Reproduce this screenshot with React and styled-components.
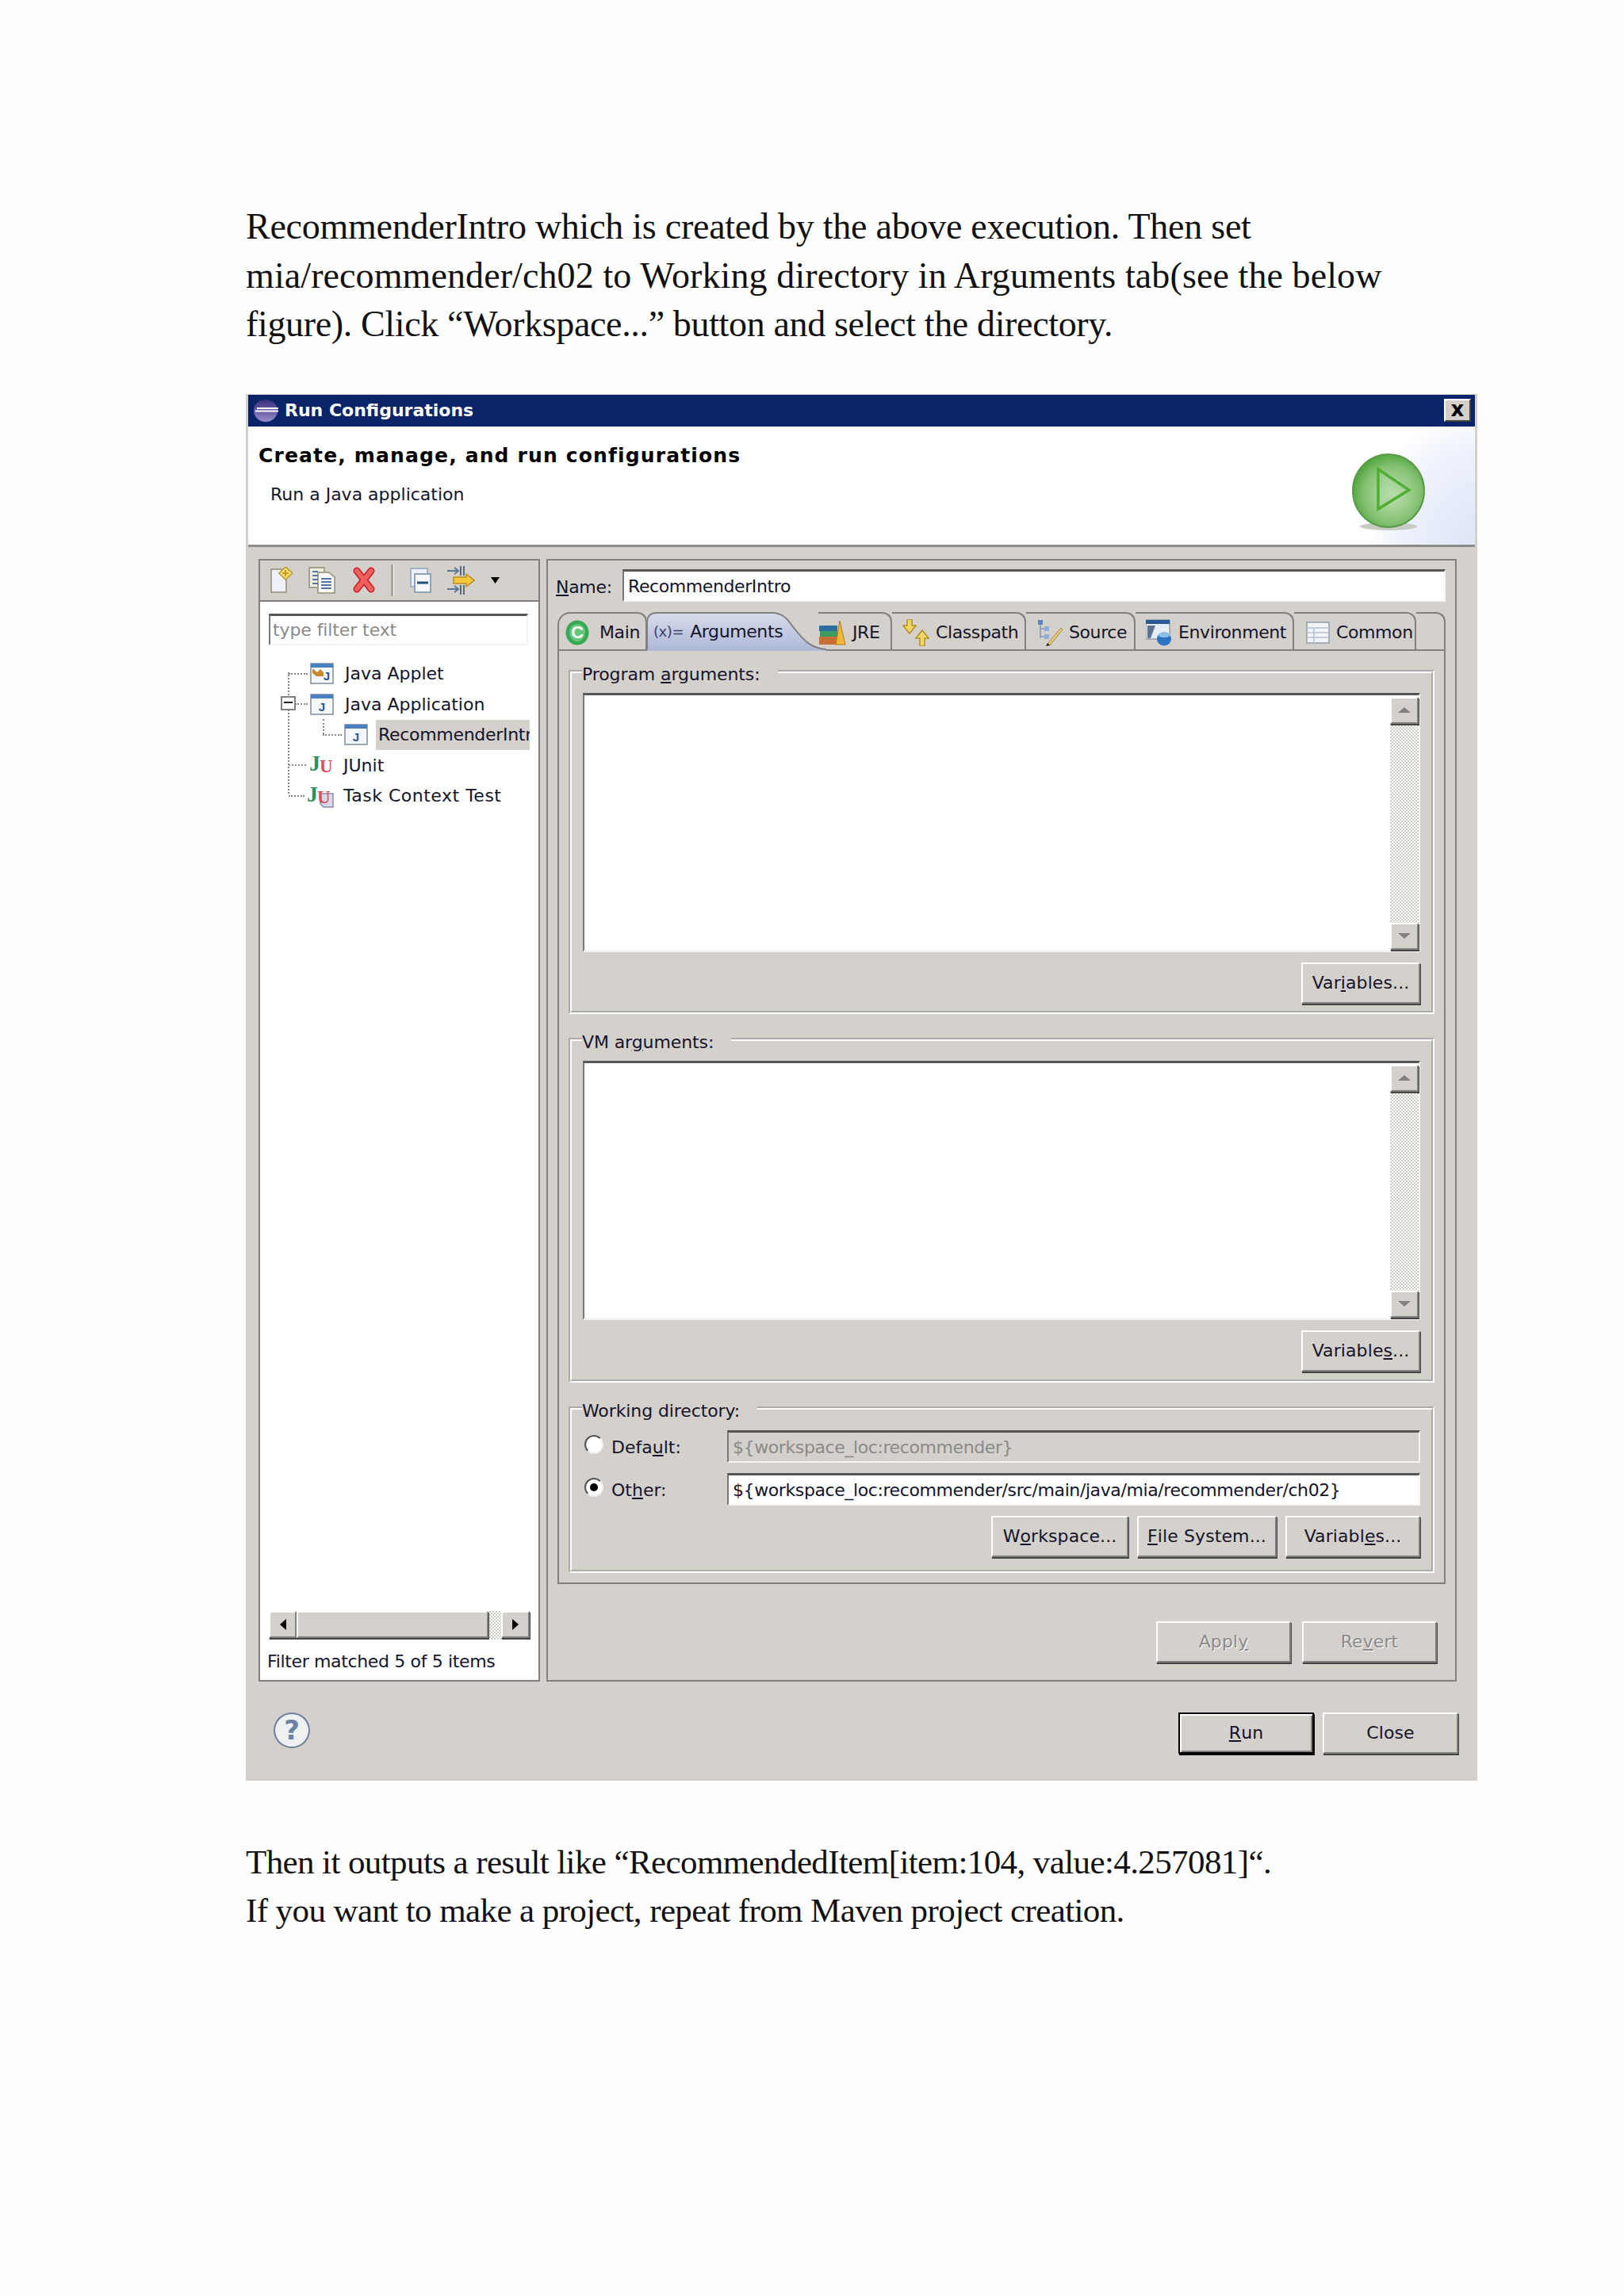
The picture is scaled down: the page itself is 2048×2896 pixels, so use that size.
import React from "react";
import styled, { createGlobalStyle } from "styled-components";

const GlobalStyle = createGlobalStyle`
  html, body {
    margin: 0;
    padding: 0;
    background: #fefefe;
  }
`;

const UI_FONT = `"DejaVu Sans", "Liberation Sans", sans-serif`;

const Page = styled.div`
  width: 2048px;
  height: 2896px;
  box-sizing: border-box;
  padding: 255px 0 0 310px;
  overflow: hidden;
`;

const Paragraph = styled.div`
  font-family: "Liberation Serif", serif;
  font-size: ${({ $size }) => $size || 46}px;
  line-height: 61.5px;
  color: #111;
  white-space: nowrap;
  font-variant-numeric: oldstyle-nums;
`;

const Line = styled.div`
  letter-spacing: ${({ $ls }) => $ls || 0}px;
`;

const Window = styled.div`
  width: 1553px;
  height: 1749px;
  box-sizing: border-box;
  margin: 57px 0 72px;
  padding: 1px 3px 0;
  background: #d4d0cb;
  display: flex;
  flex-direction: column;
  font-family: ${UI_FONT};
  font-size: 22px;
  color: #14142a;
`;

const TitleBar = styled.div`
  height: 40px;
  flex: none;
  background: #0a246a;
  display: flex;
  align-items: center;
  padding: 0 5px 0 7px;
  gap: 8px;
`;

const TitleText = styled.span`
  flex: 1;
  color: #fff;
  font-size: 22px;
  font-weight: 700;
`;

const CloseBox = styled.div`
  width: 34px;
  height: 29px;
  box-sizing: border-box;
  background: #d4d0c8;
  border: 2px solid;
  border-color: #fff #404040 #404040 #fff;
  color: #000;
  font-size: 26px;
  font-weight: 700;
  line-height: 22px;
  text-align: center;
`;

const Banner = styled.div`
  height: 152px;
  flex: none;
  box-sizing: border-box;
  background:
    radial-gradient(ellipse 135px 170px at 100% 100%, #dde5f8 0%, #eef2fc 70%, #fff 100%);
  border-bottom: 3px solid #8c8c88;
  padding: 0 63px 0 13px;
  display: flex;
  justify-content: space-between;
`;

const BannerText = styled.div`
  padding-top: 21px;
  color: #000;
`;

const Heading = styled.div`
  font-size: 25px;
  font-weight: 700;
  line-height: 32px;
  letter-spacing: 1.15px;
`;

const Subheading = styled.div`
  margin: 19px 0 0 15px;
  line-height: 28px;
  color: #14142a;
`;

const PlayWrap = styled.div`
  align-self: flex-end;
  margin-bottom: 12px;
`;

const Panels = styled.div`
  flex: none;
  display: flex;
  gap: 8px;
  padding: 15px 23px 0 13px;
`;

const LeftPanel = styled.div`
  width: 355px;
  height: 1416px;
  box-sizing: border-box;
  border: 2px solid #808080;
  background: #fff;
  display: flex;
  flex-direction: column;
`;

const Toolbar = styled.div`
  height: 52px;
  flex: none;
  box-sizing: border-box;
  background: #d4d0cb;
  border-bottom: 2px solid #808080;
  display: flex;
  align-items: center;
  gap: 20px;
  padding-left: 13px;
`;

const ToolSep = styled.div`
  width: 3px;
  height: 40px;
  background: #a8a59e;
  border-right: 1px solid #fff;
`;

const sunken = `
  box-sizing: border-box;
  border: 2px solid;
  border-top: 3px solid #555;
  border-left-color: #777;
  border-right-color: #f4f4f2;
  border-bottom-color: #f4f4f2;
`;

const FilterInput = styled.div`
  ${sunken}
  height: 40px;
  margin: 15px 13px 0 11px;
  padding-left: 3px;
  line-height: 36px;
  letter-spacing: -0.1px;
  color: #8a8a8a;
  background: #fff;
`;

const Tree = styled.div`
  position: relative;
  flex: 1;
  padding-top: 17px;

  &::before {
    content: "";
    position: absolute;
    left: 35px;
    top: 34px;
    height: 153px;
    border-left: 2px dotted #8a8a8a;
  }
`;

const TreeRow = styled.div`
  position: relative;
  height: 38.5px;
  display: flex;
  align-items: center;
  gap: ${({ $gap }) => $gap || 14}px;
  padding-left: ${({ $left }) => $left}px;

  &::before {
    content: "";
    position: absolute;
    left: ${({ $line }) => $line}px;
    width: ${({ $lineW }) => $lineW}px;
    top: 18px;
    border-top: 2px dotted #8a8a8a;
  }
`;

const ChildLine = styled.span`
  position: absolute;
  left: 79px;
  top: -1px;
  height: 19px;
  border-left: 2px dotted #8a8a8a;
`;

const Expander = styled.span`
  position: absolute;
  left: 26px;
  top: 9px;
  width: 19px;
  height: 18px;
  box-sizing: border-box;
  border: 2px solid #808080;
  background: #fff;
  z-index: 1;

  &::after {
    content: "";
    position: absolute;
    left: 2px;
    right: 2px;
    top: 5px;
    border-top: 2px solid #222;
  }
`;

const TreeLabel = styled.span`
  white-space: nowrap;
  letter-spacing: ${({ $ls }) => $ls || 0}px;
`;

const SelectedLabel = styled.span`
  width: 194px;
  height: 38px;
  margin-left: -4px;
  padding-left: 3px;
  box-sizing: border-box;
  background: #d4d0cb;
  overflow: hidden;
  white-space: nowrap;
  line-height: 38px;
  letter-spacing: -0.3px;
`;

const raised = `
  box-sizing: border-box;
  background: #d4d0cb;
  border: 2px solid;
  border-color: #fff #808080 #808080 #fff;
  box-shadow: 1px 2px 0 #444;
`;

const HScroll = styled.div`
  flex: none;
  height: 36px;
  margin: 0 11px;
  display: flex;
  background: repeating-conic-gradient(#cfccc6 0 25%, #fff 0 50%) 0 0 / 4px 4px;
`;

const ScrollButton = styled.div`
  ${raised}
  flex: none;
  width: ${({ $w }) => $w || 36}px;
  height: ${({ $h }) => $h || 34}px;
  display: flex;
  align-items: center;
  justify-content: center;
`;

const Thumb = styled.div`
  ${raised}
  width: 242px;
  height: 34px;
  flex: none;
  margin-right: 16px;
`;

const Arrow = styled.span`
  width: 0;
  height: 0;
  border-style: solid;
  border-color: transparent;
  ${({ $dir, $color }) =>
    $dir === "left"
      ? `border-width: 7px 8px 7px 0; border-right-color: ${$color};`
      : $dir === "right"
      ? `border-width: 7px 0 7px 8px; border-left-color: ${$color};`
      : $dir === "up"
      ? `border-width: 0 8px 7px 8px; border-bottom-color: ${$color};`
      : `border-width: 7px 8px 0 8px; border-top-color: ${$color};`}
`;

const Status = styled.div`
  flex: none;
  height: 26px;
  margin: 15px 0 10px 9px;
  line-height: 26px;
  letter-spacing: -0.35px;
  white-space: nowrap;
`;

const RightPanel = styled.div`
  width: 1148px;
  height: 1416px;
  box-sizing: border-box;
  border: 2px solid #808080;
  padding: 11px 12px 0;
  display: flex;
  flex-direction: column;
`;

const NameRow = styled.div`
  display: flex;
  align-items: center;
  height: 41px;
  margin-left: -2px;
`;

const NameLabel = styled.span`
  width: 84px;
  flex: none;
  line-height: 28px;
  padding-top: 5px;
  letter-spacing: -0.3px;
`;

const TextField = styled.div`
  ${sunken}
  flex: 1;
  height: 41px;
  background: ${({ $disabled }) => ($disabled ? "#d4d0cb" : "#fff")};
  color: ${({ $disabled }) => ($disabled ? "#8a8a8a" : "#14142a")};
  padding-left: 5px;
  line-height: 38px;
  letter-spacing: -0.4px;
  white-space: nowrap;
`;

const Tabs = styled.div`
  display: flex;
  height: 47px;
  margin-top: 13px;
  flex: none;
  letter-spacing: -0.4px;
`;

const Tab = styled.div`
  position: relative;
  box-sizing: border-box;
  width: ${({ $w }) => $w}px;
  margin-left: ${({ $over }) => ($over ? -10 : 0)}px;
  padding: 3px 0 0 ${({ $pad }) => $pad}px;
  display: flex;
  align-items: center;
  gap: ${({ $gap }) => $gap || 8}px;
  border-right: ${({ $active }) => ($active ? 0 : "2px solid #808080")};
  border-top: ${({ $active }) => ($active ? 0 : "2px solid #808080")};
  border-left: ${({ $first }) => ($first ? "2px solid #808080" : 0)};
  border-top-left-radius: ${({ $first }) => ($first ? 16 : 0)}px;
  border-top-right-radius: ${({ $active }) => ($active ? 0 : 12)}px;
  white-space: nowrap;
  z-index: ${({ $active }) => ($active ? 1 : 0)};
`;

const TabShape = styled.svg`
  position: absolute;
  left: 0;
  top: 0;
  z-index: -1;
`;

const ArgsGlyph = styled.span`
  font-size: 18px;
  color: #33436b;
`;

const Folder = styled.div`
  width: 1120px;
  height: 1179px;
  box-sizing: border-box;
  border: 2px solid #808080;
  padding: 10px 12px 0;
  display: flex;
  flex-direction: column;
  gap: 16px;
  flex: none;
`;

const Group = styled.fieldset`
  margin: 0;
  min-width: 0;
  height: ${({ $h }) => $h}px;
  box-sizing: border-box;
  border: 4px groove #fff;
  padding: ${({ $top }) => $top || 11}px 14px 0;
  display: flex;
  flex-direction: column;
  flex: none;
`;

const GroupLabel = styled.legend`
  margin-left: -1px;
  padding: 8px 22px 0 0;
  line-height: 24px;
  letter-spacing: -0.1px;
  white-space: nowrap;
`;

const TextBox = styled.div`
  ${sunken}
  height: 327px;
  flex: none;
  background: #fff;
  display: flex;
  justify-content: flex-end;
  padding-top: 2px;
  border-bottom-width: 3px;
  border-right-width: 2px;
`;

const VScroll = styled.div`
  width: 36px;
  display: flex;
  flex-direction: column;
  background: repeating-conic-gradient(#cfccc6 0 25%, #fff 0 50%) 0 0 / 4px 4px;
`;

const VTrack = styled.div`
  flex: 1;
`;

const PushButton = styled.div`
  box-sizing: border-box;
  width: ${({ $w }) => $w}px;
  height: 52px;
  flex: none;
  background: #d4d0cb;
  border: 2px solid;
  border-color: ${({ $default }) => ($default ? "#000" : "#fff #808080 #808080 #fff")};
  box-shadow: ${({ $default }) =>
    $default ? "inset 2px 2px 0 #fff, inset -2px -2px 0 #808080, 1px 2px 0 #000" : "1px 2px 0 #444"};
  display: flex;
  align-items: center;
  justify-content: center;
  white-space: nowrap;
  letter-spacing: 0.1px;
  color: ${({ $disabled }) => ($disabled ? "#8a8a8a" : "inherit")};
  text-shadow: ${({ $disabled }) => ($disabled ? "1px 1px 0 #fff" : "none")};
`;

const ButtonRow = styled.div`
  display: flex;
  justify-content: flex-end;
  gap: ${({ $gap }) => $gap || 11}px;
  margin-top: ${({ $top }) => $top || 0}px;
  padding-right: ${({ $right }) => $right || 0}px;
`;

const FieldRow = styled.div`
  display: flex;
  align-items: center;
  height: 41px;
  margin-bottom: 13px;
`;

const Radio = styled.span`
  position: relative;
  flex: none;
  width: 24px;
  height: 24px;
  margin: 0 0 4px 2px;
  box-sizing: border-box;
  border-radius: 50%;
  border: 2px solid;
  border-color: #555 #f0f0f0 #f0f0f0 #555;
  background: #fff;

  &::after {
    content: "";
    display: ${({ $on }) => ($on ? "block" : "none")};
    position: absolute;
    inset: 5px;
    border-radius: 50%;
    background: #000;
  }
`;

const FieldLabel = styled.span`
  width: 146px;
  flex: none;
  margin-left: 10px;
  padding-top: 2px;
`;

const Footer = styled.div`
  flex: 1;
  display: flex;
  justify-content: space-between;
  align-items: flex-start;
  padding: 39px 21px 0 32px;
`;

const HelpIcon = styled.div`
  width: 46px;
  height: 45px;
  box-sizing: border-box;
  border-radius: 50%;
  border: 2px solid #6d7f9a;
  background: #eef0f2;
  color: #6a84a6;
  font-size: 34px;
  font-weight: 700;
  line-height: 40px;
  text-align: center;
`;

const EclipseIcon = () => (
  <svg width="31" height="28" viewBox="0 0 31 28">
    <defs>
      <linearGradient id="ecl" x1="0" y1="0" x2="0" y2="1">
        <stop offset="0" stopColor="#37307f" />
        <stop offset="1" stopColor="#9a8ccb" />
      </linearGradient>
    </defs>
    <ellipse cx="15" cy="14" rx="15" ry="14" fill="url(#ecl)" />
    <path d="M4 11h27M2 14.5h29" stroke="#fff" strokeWidth="2" />
  </svg>
);

const PlayIcon = () => (
  <svg width="92" height="98" viewBox="0 0 92 98">
    <defs>
      <radialGradient id="playFill" cx="0.55" cy="0.55" r="0.6">
        <stop offset="0" stopColor="#c4e2b8" />
        <stop offset="0.65" stopColor="#84c172" />
        <stop offset="1" stopColor="#47a032" />
      </radialGradient>
    </defs>
    <ellipse cx="46" cy="92" rx="36" ry="5" fill="#c9ccc4" />
    <ellipse cx="46" cy="47" rx="45" ry="46" fill="url(#playFill)" stroke="#5b9a48" strokeWidth="2" />
    <path d="M33 20L72 46L33 70Z" fill="#a8d49c" fillOpacity="0.5" stroke="#4fae33" strokeWidth="3.5" />
  </svg>
);

const NewIcon = () => (
  <svg width="28" height="34" viewBox="0 0 28 34">
    <path d="M1 3H14L20 9V32H1Z" fill="#eef1fa" stroke="#a5a18c" strokeWidth="2" />
    <path d="M19 0L28 8L19 16L11 8Z" fill="#f6df6e" stroke="#b8962a" strokeWidth="1.5" />
    <path d="M19 4V12M15 8H23" stroke="#c89a1e" strokeWidth="2" />
  </svg>
);

const DuplicateIcon = () => (
  <svg width="36" height="34" viewBox="0 0 36 34">
    <path d="M1 1H20V26H1Z" fill="#f1efe4" stroke="#a5a18c" strokeWidth="2" />
    <path d="M12 7H26L33 13V33H12Z" fill="#fafafa" stroke="#a5a18c" strokeWidth="2" />
    <path d="M5 6H12M5 11H12M5 16H12M5 21H12M16 15H29M16 19H29M16 23H29M16 27H29" stroke="#5077a8" strokeWidth="2" />
  </svg>
);

const DeleteIcon = () => (
  <svg width="28" height="33" viewBox="0 0 28 33">
    <path d="M5 5L23 28M23 5L5 28" stroke="#c81e2c" strokeWidth="9" strokeLinecap="round" />
    <path d="M5 5L23 28M23 5L5 28" stroke="#f0605c" strokeWidth="6" strokeLinecap="round" />
  </svg>
);

const CollapseIcon = () => (
  <svg width="27" height="32" viewBox="0 0 27 32">
    <rect x="1" y="1" width="21" height="23" fill="#eef2f8" stroke="#9fb0c4" strokeWidth="2" />
    <rect x="6" y="8" width="20" height="23" fill="#f6f8fb" stroke="#8fa3b8" strokeWidth="2" />
    <path d="M9 19H23" stroke="#20507c" strokeWidth="3" />
  </svg>
);

const FilterIcon = () => (
  <svg width="35" height="36" viewBox="0 0 35 36">
    <path d="M0 6H14M9 2L14 6L9 10M0 29H14M9 25L14 29L9 33" fill="none" stroke="#5a7a94" strokeWidth="2" />
    <path d="M17 0V12M21 0V12M17 24V36M21 24V36" stroke="#5a6a78" strokeWidth="2" />
    <path d="M8 14H24V10L34 18L24 26V22H8Z" fill="#f5c93c" stroke="#b98c1e" strokeWidth="1.5" />
  </svg>
);

const DropIcon = () => (
  <svg width="11" height="8" viewBox="0 0 11 8">
    <path d="M0 0H11L5.5 8Z" fill="#000" />
  </svg>
);

const AppIcon = ({ applet }) => (
  <svg width="30" height="27" viewBox="0 0 30 27">
    <rect x="1" y="1" width="28" height="25" fill="#f4f7fc" stroke="#7f8c9c" strokeWidth="1.5" />
    <rect x="1" y="1" width="28" height="5" fill="#4a7fc0" />
    {applet && <path d="M3 7L9 12L13 8L17 12V17H8L3 13Z" fill="#c98a2c" />}
    <text x={applet ? 21 : 15} y="22" fontSize="15" fontWeight="700" fontFamily="Liberation Sans" fill="#2a5596" textAnchor="middle">J</text>
  </svg>
);

const JUnitIcon = ({ task }) => (
  <svg width={task ? 38 : 34} height="36" viewBox={task ? "0 0 38 36" : "0 0 34 36"}>
    {task && <path d="M18 15H34V32H22L18 28Z" fill="#d8d8ea" stroke="#8a8ab0" strokeWidth="1.5" />}
    <text x={task ? 1 : 2} y="25" fontSize="28" fontWeight="700" fontFamily="Liberation Serif" fill="#2f8f5f">J</text>
    <text x={task ? 14 : 15} y="27" fontSize="23" fontWeight="700" fontFamily="Liberation Serif" fill="#d8505a">U</text>
  </svg>
);

const MainIcon = () => (
  <svg width="30" height="32" viewBox="0 0 30 32">
    <ellipse cx="15" cy="16" rx="14.5" ry="15.5" fill="#37a955" />
    <ellipse cx="15" cy="16" rx="10" ry="11" fill="#66c57c" />
    <text x="15" y="23" fontSize="22" fontWeight="700" fontFamily="Liberation Sans" fill="#fff" textAnchor="middle">C</text>
  </svg>
);

const JreIcon = () => (
  <svg width="34" height="32" viewBox="0 0 34 32">
    <rect x="0" y="7" width="23" height="7" fill="#2b6f9e" />
    <rect x="1" y="14" width="22" height="7" fill="#3c9b5f" />
    <rect x="0" y="21" width="25" height="10" fill="#c76f35" />
    <path d="M21 31L26 1L33 31Z" fill="#f0b93a" stroke="#b9791a" strokeWidth="1" />
  </svg>
);

const ClasspathIcon = () => (
  <svg width="34" height="34" viewBox="0 0 34 34">
    <path d="M6 0H12V8H17L9 18L1 8H6Z" fill="#f3d766" stroke="#b08f22" strokeWidth="1.5" />
    <path d="M22 34H28V24H33L25 14L17 24H22Z" fill="#f3d766" stroke="#b08f22" strokeWidth="1.5" />
  </svg>
);

const SourceIcon = () => (
  <svg width="32" height="34" viewBox="0 0 32 34">
    <path d="M4 5V24M4 12H9M4 22H9" fill="none" stroke="#7f98c0" strokeWidth="1.5" />
    <rect x="1" y="1" width="6" height="6" fill="#5a86c0" />
    <rect x="9" y="9" width="6" height="6" fill="#8fb0dc" />
    <rect x="9" y="19" width="6" height="6" fill="#8fb0dc" />
    <path d="M13 31L30 11L32 13L16 33Z" fill="#e8c878" stroke="#a88a40" strokeWidth="1" />
    <path d="M11 34L13 30L16 33Z" fill="#222" />
  </svg>
);

const EnvIcon = () => (
  <svg width="33" height="34" viewBox="0 0 33 34">
    <rect x="0" y="1" width="30" height="24" fill="#e6ecf4" stroke="#6f8090" strokeWidth="1" />
    <rect x="0" y="1" width="30" height="5" fill="#2a5a96" />
    <path d="M2 8H12L6 24H2Z" fill="#5b7390" />
    <ellipse cx="23" cy="25" rx="9" ry="8.5" fill="#2d74c2" />
    <ellipse cx="23" cy="20" rx="8" ry="3" fill="#8ac0ea" />
  </svg>
);

const CommonIcon = () => (
  <svg width="30" height="28" viewBox="0 0 30 28">
    <rect x="1" y="1" width="28" height="26" fill="#f2f4f8" stroke="#8f9cb0" strokeWidth="1.5" />
    <path d="M1 8H29M1 14H29M1 20H29M10 8V27" stroke="#b5c0d2" strokeWidth="1.5" />
  </svg>
);

const ArgumentsTabShape = () => (
  <TabShape width="226" height="49" viewBox="0 0 226 49">
    <defs>
      <linearGradient id="activeTab" x1="0" y1="0" x2="0" y2="1">
        <stop offset="0" stopColor="#d8dbea" />
        <stop offset="1" stopColor="#aeb7d8" />
      </linearGradient>
    </defs>
    <path d="M0 49V14Q0 1 12 1H158C175 1 180 15 190 26C198 36 208 46 226 47V49Z" fill="url(#activeTab)" />
    <path d="M0 47V14Q0 1 12 1H158C175 1 180 15 190 26C198 36 208 46 226 47" fill="none" stroke="#808080" strokeWidth="2" />
  </TabShape>
);

const ScrollColumn = ({ color }) => (
  <VScroll>
    <ScrollButton $h={34}>
      <Arrow $dir="up" $color={color} />
    </ScrollButton>
    <VTrack />
    <ScrollButton $h={34}>
      <Arrow $dir="down" $color={color} />
    </ScrollButton>
  </VScroll>
);

const App = () => {
  return (
    <Page>
      <GlobalStyle />
      <Paragraph>
        <Line $ls={-0.25}>RecommenderIntro which is created by the above execution. Then set</Line>
        <Line $ls={0.1}>mia/recommender/ch02 to Working directory in Arguments tab(see the below</Line>
        <Line $ls={-0.35}>figure). Click “Workspace...” button and select the directory.</Line>
      </Paragraph>

      <Window>
        <TitleBar>
          <EclipseIcon />
          <TitleText>Run Configurations</TitleText>
          <CloseBox>x</CloseBox>
        </TitleBar>
        <Banner>
          <BannerText>
            <Heading>Create, manage, and run configurations</Heading>
            <Subheading>Run a Java application</Subheading>
          </BannerText>
          <PlayWrap>
            <PlayIcon />
          </PlayWrap>
        </Banner>

        <Panels>
          <LeftPanel>
            <Toolbar>
              <NewIcon />
              <DuplicateIcon />
              <DeleteIcon />
              <ToolSep />
              <CollapseIcon />
              <FilterIcon />
              <DropIcon />
            </Toolbar>
            <FilterInput>type filter text</FilterInput>
            <Tree>
              <TreeRow $left={63} $line={36} $lineW={24}>
                <AppIcon applet />
                <TreeLabel>Java Applet</TreeLabel>
              </TreeRow>
              <TreeRow $left={63} $line={44} $lineW={16}>
                <Expander />
                <AppIcon />
                <TreeLabel>Java Application</TreeLabel>
              </TreeRow>
              <TreeRow $left={106} $line={79} $lineW={24}>
                <ChildLine />
                <AppIcon />
                <SelectedLabel>RecommenderIntro</SelectedLabel>
              </TreeRow>
              <TreeRow $left={60} $line={36} $lineW={22} $gap={11}>
                <JUnitIcon />
                <TreeLabel>JUnit</TreeLabel>
              </TreeRow>
              <TreeRow $left={58} $line={36} $lineW={20} $gap={9}>
                <JUnitIcon task />
                <TreeLabel $ls={0.5}>Task Context Test</TreeLabel>
              </TreeRow>
            </Tree>
            <HScroll>
              <ScrollButton $w={35}>
                <Arrow $dir="left" $color="#000" />
              </ScrollButton>
              <Thumb />
              <ScrollButton>
                <Arrow $dir="right" $color="#000" />
              </ScrollButton>
            </HScroll>
            <Status>Filter matched 5 of 5 items</Status>
          </LeftPanel>

          <RightPanel>
            <NameRow>
              <NameLabel>
                <u>N</u>ame:
              </NameLabel>
              <TextField>RecommenderIntro</TextField>
            </NameRow>

            <Tabs>
              <Tab $first $w={113} $pad={8} $gap={13}>
                <MainIcon />
                Main
              </Tab>
              <Tab $active $w={226} $pad={8} $gap={8}>
                <ArgumentsTabShape />
                <ArgsGlyph>(x)=</ArgsGlyph>
                Arguments
              </Tab>
              <Tab $over $w={93} $pad={1}>
                <JreIcon />
                JRE
              </Tab>
              <Tab $w={169} $pad={13}>
                <ClasspathIcon />
                Classpath
              </Tab>
              <Tab $w={138} $pad={14}>
                <SourceIcon />
                Source
              </Tab>
              <Tab $w={200} $pad={13}>
                <EnvIcon />
                Environment
              </Tab>
              <Tab $w={154} $pad={15}>
                <CommonIcon />
                Common
              </Tab>
              <Tab $w={37} $pad={0} />
            </Tabs>

            <Folder>
              <Group $h={448}>
                <GroupLabel>
                  Program <u>a</u>rguments:
                </GroupLabel>
                <TextBox>
                  <ScrollColumn color="#808080" />
                </TextBox>
                <ButtonRow $top={13}>
                  <PushButton $w={150}>
                    Var<u>i</u>ables...
                  </PushButton>
                </ButtonRow>
              </Group>

              <Group $h={449}>
                <GroupLabel>
                  VM ar<u>g</u>uments:
                </GroupLabel>
                <TextBox>
                  <ScrollColumn color="#808080" />
                </TextBox>
                <ButtonRow $top={13}>
                  <PushButton $w={150}>
                    Variable<u>s</u>...
                  </PushButton>
                </ButtonRow>
              </Group>

              <Group $h={224} $top={12}>
                <GroupLabel>Working directory:</GroupLabel>
                <FieldRow>
                  <Radio />
                  <FieldLabel>
                    Defa<u>u</u>lt:
                  </FieldLabel>
                  <TextField $disabled>{"${workspace_loc:recommender}"}</TextField>
                </FieldRow>
                <FieldRow>
                  <Radio $on />
                  <FieldLabel>
                    Ot<u>h</u>er:
                  </FieldLabel>
                  <TextField>{"${workspace_loc:recommender/src/main/java/mia/recommender/ch02}"}</TextField>
                </FieldRow>
                <ButtonRow>
                  <PushButton $w={173}>
                    W<u>o</u>rkspace...
                  </PushButton>
                  <PushButton $w={176}>
                    <u>F</u>ile System...
                  </PushButton>
                  <PushButton $w={170}>
                    Variabl<u>e</u>s...
                  </PushButton>
                </ButtonRow>
              </Group>
            </Folder>

            <ButtonRow $top={47} $right={11} $gap={14}>
              <PushButton $w={170} $disabled>
                Appl<u>y</u>
              </PushButton>
              <PushButton $w={170} $disabled>
                Re<u>v</u>ert
              </PushButton>
            </ButtonRow>
          </RightPanel>
        </Panels>

        <Footer>
          <HelpIcon>?</HelpIcon>
          <ButtonRow>
            <PushButton $w={171} $default>
              <u>R</u>un
            </PushButton>
            <PushButton $w={171}>Close</PushButton>
          </ButtonRow>
        </Footer>
      </Window>

      <Paragraph $size={43}>
        <Line $ls={-0.6}>Then it outputs a result like “RecommendedItem[item:104, value:4.257081]“.</Line>
        <Line $ls={-0.6}>If you want to make a project, repeat from Maven project creation.</Line>
      </Paragraph>
    </Page>
  );
};

export default App;
